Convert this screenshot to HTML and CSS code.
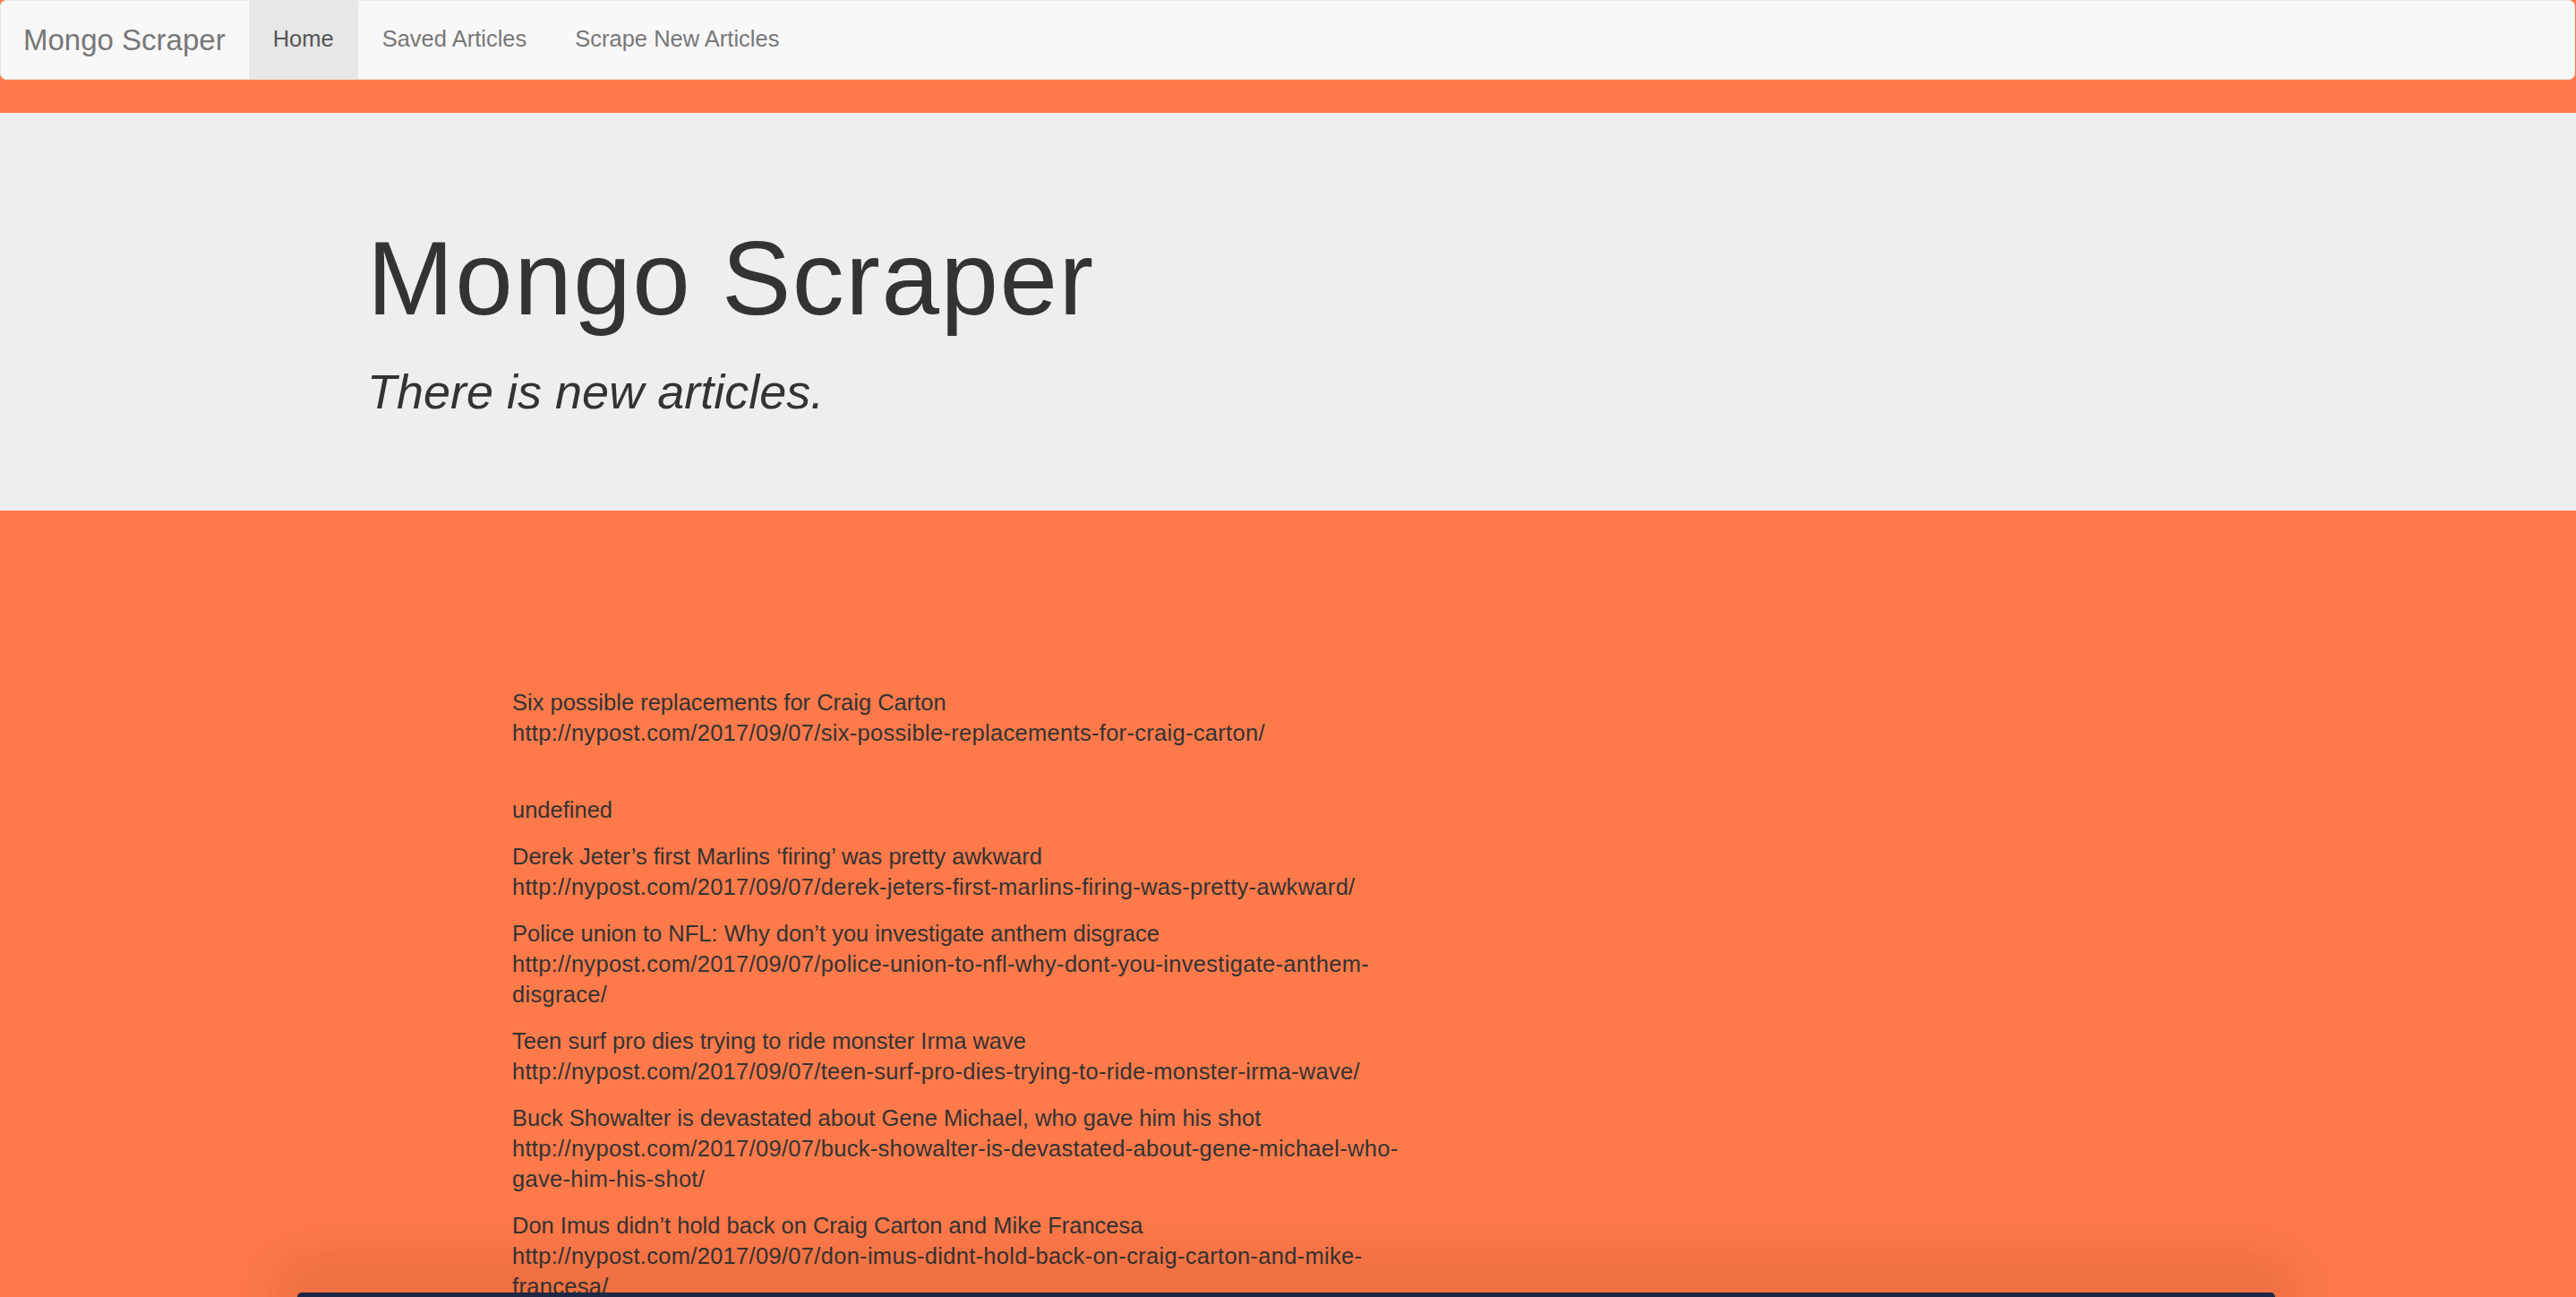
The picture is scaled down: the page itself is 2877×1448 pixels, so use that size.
FILE: index.html
```html
<!DOCTYPE html>
<html lang="en">
<head>
<meta charset="utf-8">
<title>Mongo Scraper</title>
<link rel="stylesheet" href="styles.css">
</head>
<body>
<nav class="navbar">
  <a class="brand" href="#">Mongo Scraper</a>
  <ul class="nav">
    <li class="active"><a href="#">Home</a></li>
    <li><a href="#">Saved Articles</a></li>
    <li><a href="#">Scrape New Articles</a></li>
  </ul>
</nav>
<header class="jumbotron">
  <div class="container">
    <h1>Mongo Scraper</h1>
    <h2><em>There is new articles.</em></h2>
  </div>
</header>
<main class="main">
  <div class="container">
    <div class="list">
      <p>Six possible replacements for Craig Carton<br><span class="url">http://nypost.com/2017/09/07/six-possible-replacements-for-craig-carton/</span></p>
      <p><br>undefined</p>
      <p>Derek Jeter’s first Marlins ‘firing’ was pretty awkward<br><span class="url">http://nypost.com/2017/09/07/derek-jeters-first-marlins-firing-was-pretty-awkward/</span></p>
      <p>Police union to NFL: Why don’t you investigate anthem disgrace<br><span class="url">http://nypost.com/2017/09/07/police-union-to-nfl-why-dont-you-investigate-anthem-disgrace/</span></p>
      <p>Teen surf pro dies trying to ride monster Irma wave<br><span class="url">http://nypost.com/2017/09/07/teen-surf-pro-dies-trying-to-ride-monster-irma-wave/</span></p>
      <p>Buck Showalter is devastated about Gene Michael, who gave him his shot<br><span class="url">http://nypost.com/2017/09/07/buck-showalter-is-devastated-about-gene-michael-who-gave-him-his-shot/</span></p>
      <p>Don Imus didn’t hold back on Craig Carton and Mike Francesa<br><span class="url">http://nypost.com/2017/09/07/don-imus-didnt-hold-back-on-craig-carton-and-mike-francesa/</span></p>
    </div>
  </div>
</main>
<div class="dock"></div>
</body>
</html>
```

FILE: styles.css
```css
html, body {
  margin: 0;
  padding: 0;
}
body {
  background: #ff7a4a;
  color: #333;
  font-family: "Liberation Sans", Arial, Helvetica, sans-serif;
  font-size: 25.5px;
  line-height: 34px;
  overflow: hidden;
}
.navbar {
  display: flex;
  align-items: stretch;
  height: 87px;
  background: #f8f8f8;
  border: 1px solid #e7e7e7;
  border-radius: 7px;
  margin: 0 1px 37px 0;
}
.brand {
  display: block;
  font-size: 33px;
  line-height: 34px;
  color: #777;
  text-decoration: none;
  padding: 27px 26px 0 25px;
}
.nav {
  list-style: none;
  margin: 0;
  padding: 0;
  display: flex;
}
.nav a {
  display: block;
  height: 87px;
  box-sizing: border-box;
  padding: 25px 27px 0;
  line-height: 34px;
  font-size: 25.5px;
  color: #777;
  text-decoration: none;
}
.nav .active a {
  background: #e7e7e7;
  color: #555;
}
.jumbotron {
  background: #eee;
  padding: 88px 0;
}
.container {
  max-width: 2147px;
  margin: 0 auto;
  padding: 0 45px;
  box-sizing: border-box;
}
.jumbotron h1 {
  font-size: 116px;
  line-height: 1.1;
  font-weight: 400;
  letter-spacing: 1.5px;
  margin: 34px 0 0;
}
.jumbotron h2 {
  font-size: 54px;
  line-height: 1.1;
  font-weight: 400;
  margin: 32px 0 15px;
}
.main {
  padding-top: 197px;
}
.list {
  width: 1018px;
  margin-left: 162px;
}
.list p {
  margin: 0 0 18px;
}
.url {
  letter-spacing: 0.3px;
}
.dock {
  position: fixed;
  left: 332px;
  bottom: 0;
  width: 2209px;
  height: 5px;
  background: #1e2746;
  border-radius: 8px 8px 0 0;
  box-shadow: 0 -6px 70px 28px rgba(80, 30, 0, 0.16);
}
```
